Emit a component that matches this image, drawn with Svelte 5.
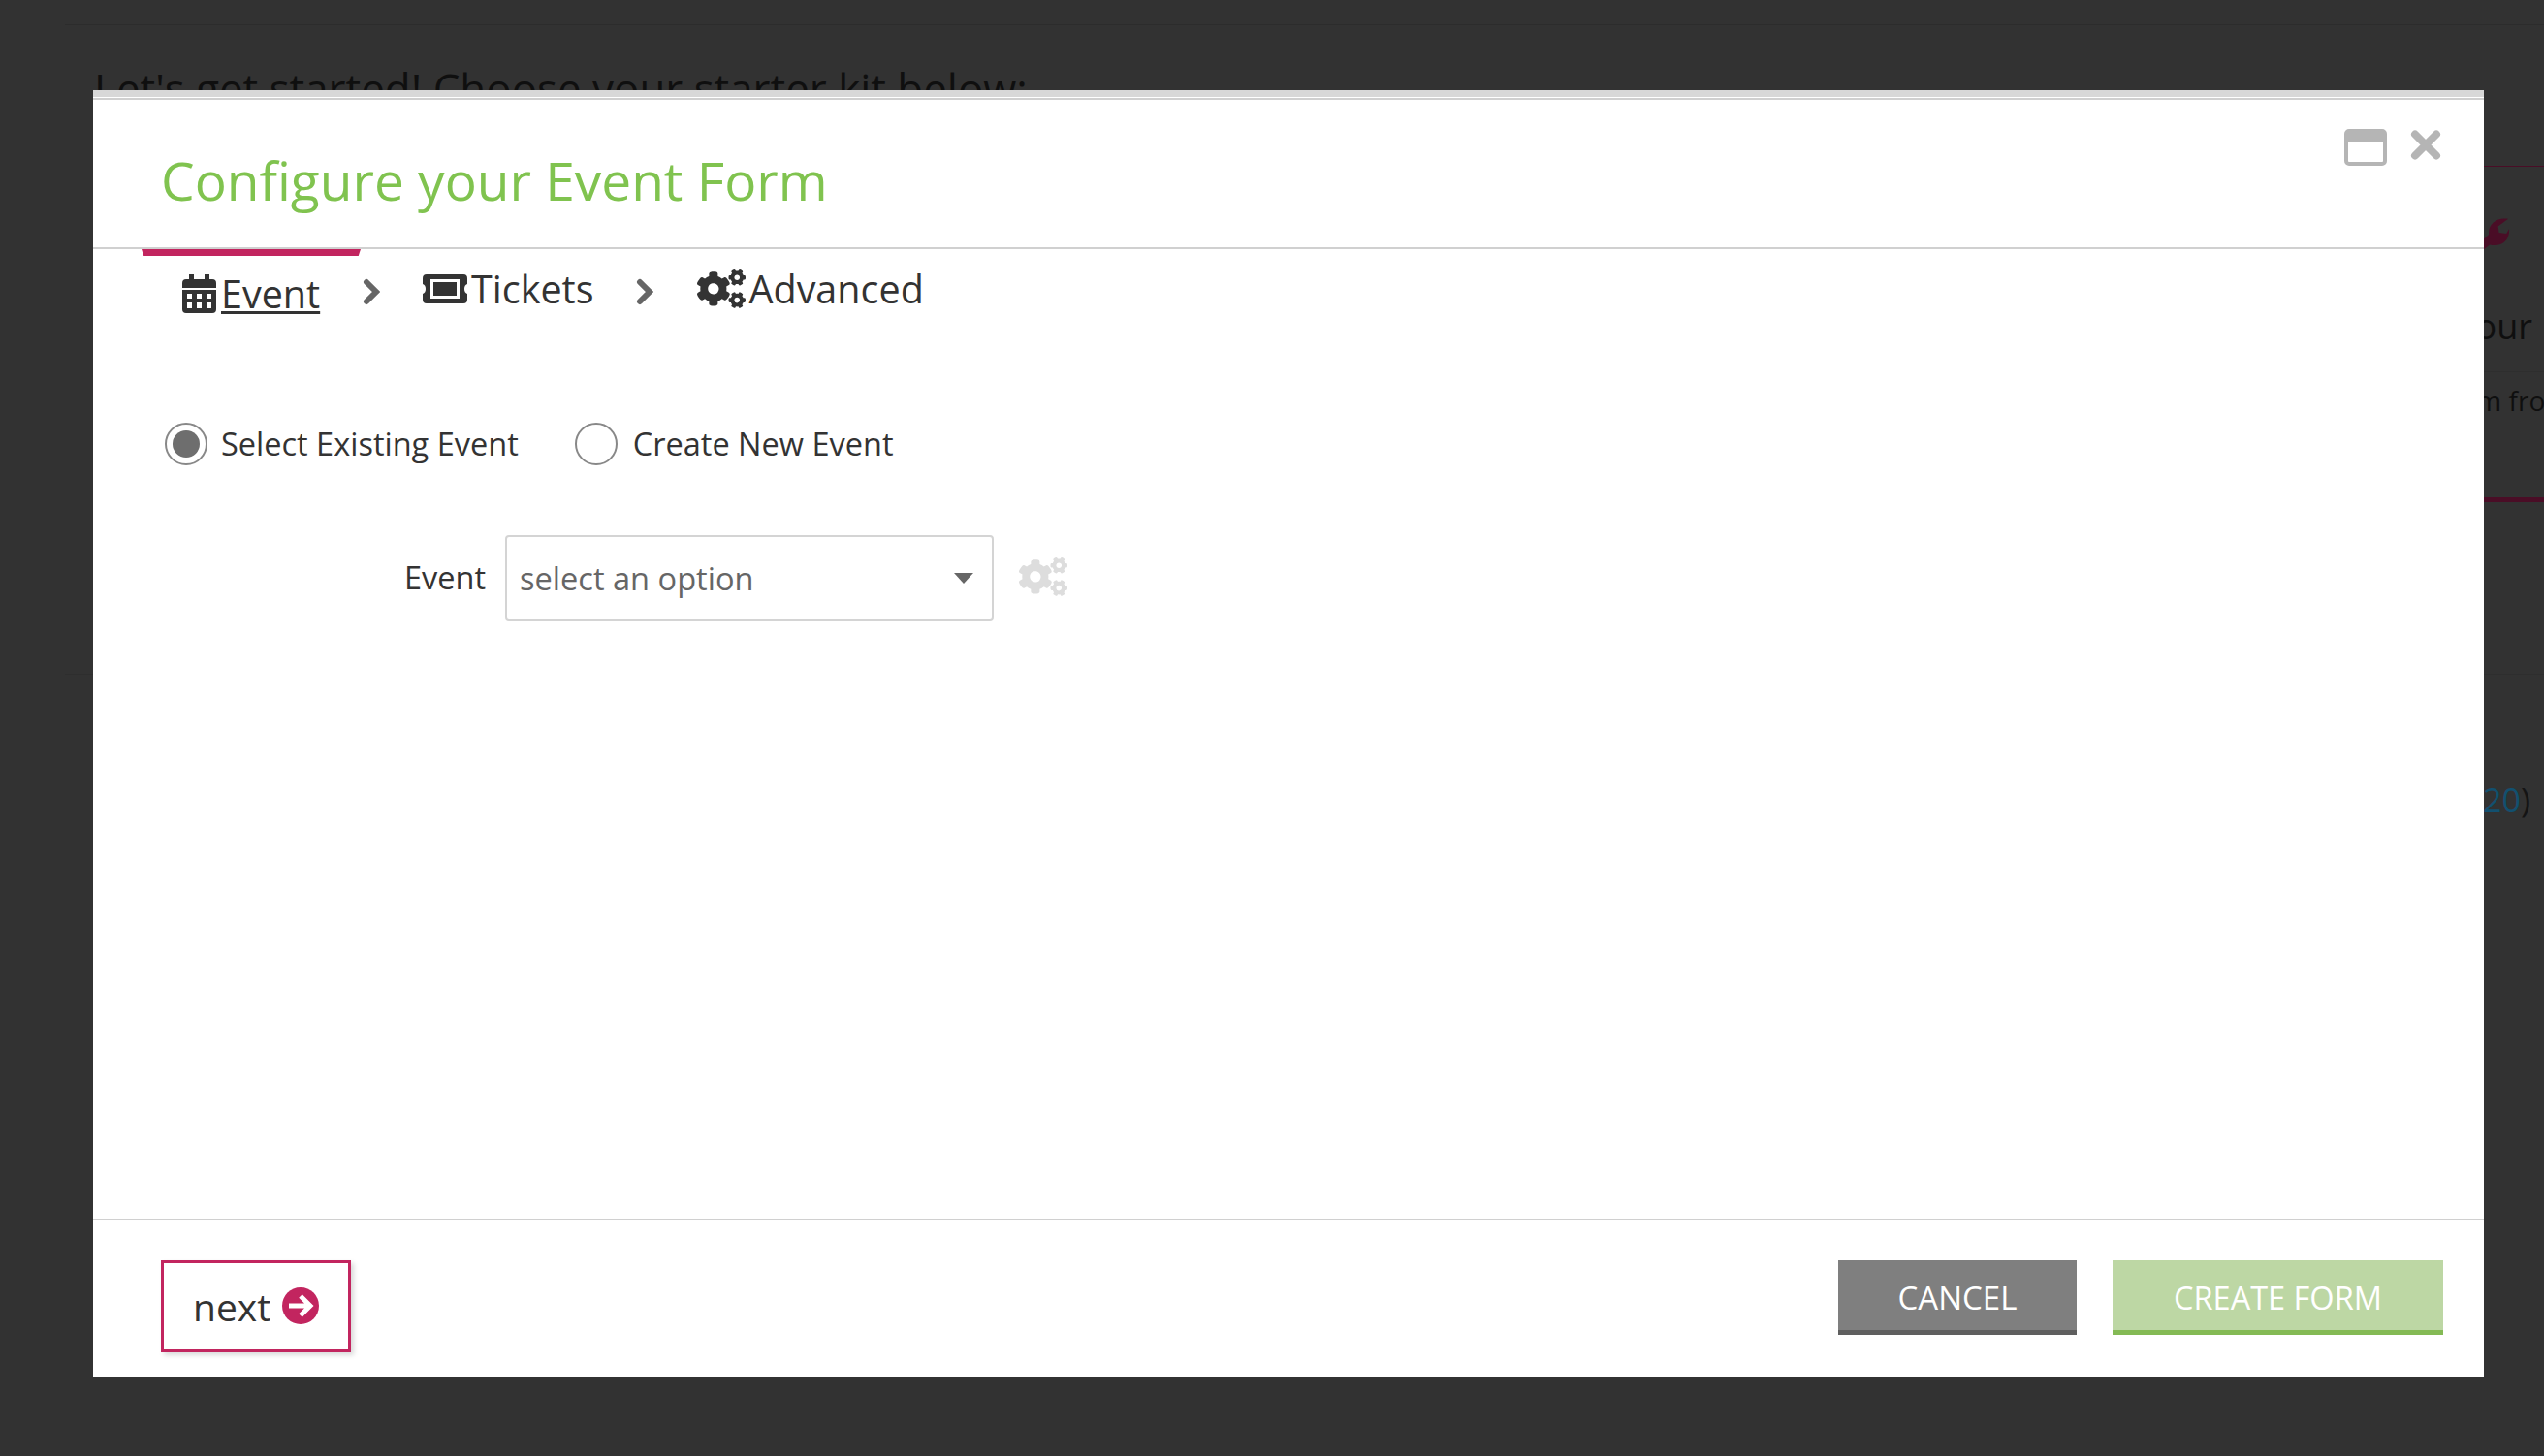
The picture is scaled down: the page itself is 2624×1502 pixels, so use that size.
<script lang="ts">
  let mode = $state('existing');
  const cogs = "M512.1 191l-8.2 14.3c-3 5.3-9.4 7.5-15.1 5.4-11.8-4.4-22.6-10.7-32.1-18.6-4.6-3.8-5.8-10.5-2.8-15.7l8.2-14.3c-6.9-8-12.3-17.3-15.9-27.4h-16.5c-6 0-11.2-4.3-12.2-10.3-2-12-2.1-24.6 0-37.1 1-6 6.2-10.4 12.2-10.4h16.5c3.6-10.1 9-19.4 15.9-27.4l-8.2-14.3c-3-5.2-1.9-11.9 2.8-15.7 9.5-7.9 20.4-14.2 32.1-18.6 5.7-2.1 12.1.1 15.1 5.4l8.2 14.3c10.5-1.9 21.2-1.9 31.7 0L552 6.3c3-5.3 9.4-7.5 15.1-5.4 11.8 4.4 22.6 10.7 32.1 18.6 4.6 3.8 5.8 10.5 2.8 15.7l-8.2 14.3c6.9 8 12.3 17.3 15.9 27.4h16.5c6 0 11.2 4.3 12.2 10.3 2 12 2.1 24.6 0 37.1-1 6-6.2 10.4-12.2 10.4h-16.5c-3.6 10.1-9 19.4-15.9 27.4l8.2 14.3c3 5.2 1.9 11.9-2.8 15.7-9.5 7.9-20.4 14.2-32.1 18.6-5.7 2.1-12.1-.1-15.1-5.4l-8.2-14.3c-10.4 1.9-21.2 1.9-31.7 0zm-10.5-58.8c38.5 29.6 82.4-14.3 52.8-52.8-38.5-29.7-82.4 14.3-52.8 52.8zM386.3 286.1l33.7 16.8c10.1 5.8 14.5 18.1 10.5 29.1-8.9 24.2-26.4 46.4-42.6 65.8-7.4 8.9-20.2 11.1-30.3 5.3l-29.1-16.8c-16 13.7-34.6 24.6-54.9 31.7v33.6c0 11.6-8.3 21.6-19.7 23.6-24.6 4.2-50.4 4.4-75.9 0-11.5-2-20-11.9-20-23.6V418c-20.3-7.2-38.9-18-54.9-31.7L74 403c-10 5.8-22.9 3.6-30.3-5.3-16.2-19.4-33.3-41.6-42.2-65.7-4-10.9.4-23.2 10.5-29.1l33.3-16.8c-3.9-20.9-3.9-42.4 0-63.4L12 205.8c-10.1-5.8-14.6-18.1-10.5-29 8.9-24.2 26-46.4 42.2-65.8 7.4-8.9 20.2-11.1 30.3-5.3l29.1 16.8c16-13.7 34.6-24.6 54.9-31.7V57.1c0-11.5 8.2-21.5 19.6-23.5 24.6-4.2 50.5-4.4 76-.1 11.5 2 20 11.9 20 23.6v33.6c20.3 7.2 38.9 18 54.9 31.7l29.1-16.8c10-5.8 22.9-3.6 30.3 5.3 16.2 19.4 33.2 41.6 42.1 65.8 4 10.9.1 23.2-10 29.1l-33.7 16.8c3.9 21 3.9 42.5 0 63.5zm-117.6 21.1c59.2-77-28.7-164.9-105.7-105.7-59.2 77 28.7 164.9 105.7 105.7zm243.4 182.7l-8.2 14.3c-3 5.3-9.4 7.5-15.1 5.4-11.8-4.4-22.6-10.7-32.1-18.6-4.6-3.8-5.8-10.5-2.8-15.7l8.2-14.3c-6.9-8-12.3-17.3-15.9-27.4h-16.5c-6 0-11.2-4.3-12.2-10.3-2-12-2.1-24.6 0-37.1 1-6 6.2-10.4 12.2-10.4h16.5c3.6-10.1 9-19.4 15.9-27.4l-8.2-14.3c-3-5.2-1.9-11.9 2.8-15.7 9.5-7.9 20.4-14.2 32.1-18.6 5.7-2.1 12.1.1 15.1 5.4l8.2 14.3c10.5-1.9 21.2-1.9 31.7 0l8.2-14.3c3-5.3 9.4-7.5 15.1-5.4 11.8 4.4 22.6 10.7 32.1 18.6 4.6 3.8 5.8 10.5 2.8 15.7l-8.2 14.3c6.9 8 12.3 17.3 15.9 27.4h16.5c6 0 11.2 4.3 12.2 10.3 2 12 2.1 24.6 0 37.1-1 6-6.2 10.4-12.2 10.4h-16.5c-3.6 10.1-9 19.4-15.9 27.4l8.2 14.3c3 5.2 1.9 11.9-2.8 15.7-9.5 7.9-20.4 14.2-32.1 18.6-5.7 2.1-12.1-.1-15.1-5.4l-8.2-14.3c-10.4 1.9-21.2 1.9-31.7 0zM501.6 431c38.5 29.6 82.4-14.3 52.8-52.8-38.5-29.6-82.4 14.3-52.8 52.8z";
</script>

{#snippet chevron()}
  <svg class="chevron" viewBox="0 0 18 28"><path d="M4 4l10 10L4 24" fill="none" stroke="#666" stroke-width="6" stroke-linecap="round" stroke-linejoin="miter"/></svg>
{/snippet}

<div class="page">
  <div class="rule-top"></div>
  <p class="lead">Let's get started! Choose your starter kit below:</p>
  <div class="kit">
    <svg class="wrench" viewBox="0 0 40 40"><path d="M0 36L18 20C17 9 26 1 39 3L28 11l1 7 8 1 3-5c1 13-9 20-21 17L8 40z" fill="#4a0d26"/></svg>
    <div class="kit-title">Configure your</div>
    <div class="kit-text">Build a form from scratch</div>
  </div>
  <div class="rule-mid"></div>
  <div class="date">(20<span class="year">20</span><span class="paren">)</span></div>

  <div class="modal">
    <div class="band"></div>
    <header>
      <h1>Configure your Event Form</h1>
      <div class="window-tools">
        <svg class="maximize" viewBox="0 0 44 38"><rect x="2" y="2" width="40" height="34" rx="3" fill="#fff" stroke="#b5b5b5" stroke-width="4"/><rect x="2" y="2" width="40" height="12" fill="#b5b5b5"/></svg>
        <svg class="close" viewBox="0 0 32 32"><path d="M5 5l22 22M27 5L5 27" stroke="#b5b5b5" stroke-width="8" stroke-linecap="round"/></svg>
      </div>
    </header>

    <nav>
      <div class="tab active">
        <svg class="cal" viewBox="0 0 35 40"><path fill-rule="evenodd" fill="#333" d="M7 0h5v5h11V0h5v5h3q4 0 4 4v5H0V9q0-4 4-4h3zM0 16h35v20q0 4-4 4H4q-4 0-4-4zM5 20v5h5v-5zm10 0v5h5v-5zm10 0v5h5v-5zM5 29v6h5v-6zm10 0v6h5v-6zm10 0v6h5v-6z"/></svg>
        <span class="label">Event</span>
      </div>
      {@render chevron()}
      <div class="tab">
        <svg class="ticket" viewBox="0 0 46 30"><path fill-rule="evenodd" fill="#333" d="M4 0h38q4 0 4 4v6q-3 1-3 5t3 5v6q0 4-4 4H4q-4 0-4-4v-6q3-1 3-5T0 10V4q0-4 4-4zm4 5v20h30V5z"/><rect x="11" y="8" width="24" height="14" fill="#333"/></svg>
        <span class="label">Tickets</span>
      </div>
      <div class="tickets-gap"></div>
      {@render chevron()}
      <div class="tab">
        <svg class="cogs" viewBox="0 0 640 512"><path fill="#333" d={cogs}/></svg>
        <span class="label">Advanced</span>
      </div>
    </nav>

    <section class="body">
      <div class="radios">
        <label class="radio">
          <input type="radio" name="mode" value="existing" bind:group={mode} />
          <span class="dot" class:on={mode === 'existing'}></span>
          Select Existing Event
        </label>
        <label class="radio">
          <input type="radio" name="mode" value="new" bind:group={mode} />
          <span class="dot" class:on={mode === 'new'}></span>
          Create New Event
        </label>
      </div>
      <div class="field">
        <span class="field-label">Event</span>
        <div class="select">
          <span>select an option</span>
          <i class="caret"></i>
        </div>
        <svg class="cogs-light" viewBox="0 0 640 512"><path fill="#ddd" d={cogs}/></svg>
      </div>
    </section>

    <footer>
      <button class="next">
        next
        <svg viewBox="0 0 38 38"><circle cx="19" cy="19" r="19" fill="#c2255f"/><path d="M7 19h21M19 9l10 10-10 10" fill="none" stroke="#fff" stroke-width="5"/></svg>
      </button>
      <div class="actions">
        <button class="btn cancel">CANCEL</button>
        <button class="btn create">CREATE FORM</button>
      </div>
    </footer>
  </div>
</div>

<style>
  :global(body) {
    margin: 0;
    background: #323232;
    font-family: "Open Sans", "Noto Sans", sans-serif;
  }
  .page {
    position: relative;
    width: 2624px;
    height: 1502px;
    overflow: hidden;
    background: #323232;
    color: #0f0f0f;
  }
  .rule-top {
    position: absolute;
    left: 67px;
    right: 0;
    top: 25px;
    height: 1px;
    background: #2c2c2c;
  }
  .lead {
    position: absolute;
    left: 97px;
    top: 62px;
    margin: 0;
    font-size: 43.9px;
    line-height: 58px;
    white-space: nowrap;
  }
  .kit {
    position: absolute;
    left: 2480px;
    top: 171px;
    width: 300px;
    height: 347px;
    box-sizing: border-box;
    border-top: 1px solid #4a0d26;
    border-bottom: 5px solid #4a0d26;
    white-space: nowrap;
  }
  .wrench {
    position: absolute;
    left: 67px;
    top: 51px;
    width: 44px;
    height: 38px;
  }
  .kit-title {
    position: absolute;
    right: 168px;
    top: 140px;
    font-size: 36px;
    line-height: 50px;
  }
  .kit-text {
    position: absolute;
    left: -60px;
    top: 211px;
    padding-top: 10px;
    font-size: 28px;
    line-height: 38px;
    border-top: 1px solid #2e2e2e;
  }
  .rule-mid {
    position: absolute;
    left: 67px;
    right: 0;
    top: 695px;
    height: 1px;
    background: #2e2e2e;
  }
  .date {
    position: absolute;
    right: 14px;
    top: 802px;
    font-size: 34px;
    line-height: 46px;
    white-space: nowrap;
  }
  .year { color: #12506f; }
  .paren { color: #141414; }
  .modal {
    position: absolute;
    left: 96px;
    top: 93px;
    width: 2466px;
    height: 1327px;
    display: flex;
    flex-direction: column;
    background: #fff;
    color: #333;
  }
  .band {
    flex: none;
    box-sizing: border-box;
    height: 10px;
    background: linear-gradient(#d8d8d8 7px, #fff 7px);
    border-bottom: 2px solid #d0d0d0;
  }
  header {
    position: relative;
    flex: none;
    height: 154px;
    box-sizing: border-box;
    padding: 47px 0 0 70px;
    border-bottom: 2px solid #d0d0d0;
  }
  h1 {
    margin: 0;
    font-size: 55px;
    line-height: 72px;
    font-weight: 400;
    color: #80c34f;
  }
  .window-tools {
    position: absolute;
    top: 30px;
    right: 44px;
    display: flex;
    gap: 24px;
    align-items: flex-start;
  }
  .maximize { width: 44px; height: 38px; }
  .close { width: 32px; height: 33px; }
  nav {
    flex: none;
    display: flex;
    align-items: flex-start;
    padding-left: 50px;
  }
  .tab {
    display: flex;
    align-items: flex-start;
    gap: 4px;
    margin-top: 21px;
    font-size: 39.5px;
    line-height: 40px;
  }
  .tab svg { flex: none; margin-top: 5px; }
  .tab.active {
    box-sizing: border-box;
    width: 226px;
    margin-top: 0;
    padding: 26px 0 0 42px;
    gap: 5px;
    position: relative;
  }
  .tab.active::before {
    content: "";
    position: absolute;
    left: 0;
    right: 0;
    top: 0;
    height: 7px;
    background: #c2255f;
    clip-path: polygon(0 0, 100% 0, 99% 100%, 1% 100%);
  }
  .tab.active svg { margin-top: 0; }
  .tab.active .label { text-decoration: underline; text-decoration-thickness: 3px; text-underline-offset: 3px; }
  .chevron { flex: none; width: 18px; height: 28px; margin: 30px 44px 0 2px; }
  .tickets-gap { flex: none; width: 41px; }
  .cal { width: 35px; height: 40px; }
  .ticket { width: 46px; height: 30px; }
  .cogs { width: 50px; height: 40px; margin-top: 0 !important; margin-left: 1px; }
  .body {
    flex: 1;
    padding: 0 0 0 74px;
  }
  .radios {
    display: flex;
    gap: 58px;
    margin-top: 113px;
  }
  .radio {
    display: flex;
    align-items: center;
    gap: 14px;
    font-size: 32.5px;
    line-height: 44px;
  }
  .radio:last-child { gap: 16px; }
  .radio input { display: none; }
  .dot {
    box-sizing: border-box;
    width: 44px;
    height: 44px;
    border: 2px solid #888;
    border-radius: 50%;
    background: #fff;
    display: grid;
    place-items: center;
  }
  .dot.on::after {
    content: "";
    width: 28px;
    height: 28px;
    border-radius: 50%;
    background: #6e6e6e;
  }
  .field {
    display: flex;
    align-items: center;
    margin-top: 72px;
    margin-left: 247px;
  }
  .field-label { font-size: 32.5px; line-height: 44px; width: 102px; margin-top: -2px; }
  .select {
    box-sizing: border-box;
    width: 504px;
    height: 89px;
    margin-left: 2px;
    padding: 0 19px 0 13px;
    display: flex;
    align-items: center;
    justify-content: space-between;
    border: 2px solid #d4d4d4;
    border-radius: 4px;
    font-size: 32.6px;
    color: #666;
  }
  .caret {
    width: 0;
    height: 0;
    border-left: 10px solid transparent;
    border-right: 10px solid transparent;
    border-top: 11px solid #666;
  }
  .cogs-light { width: 52px; height: 40px; margin-left: 25px; margin-top: -3px; }
  footer {
    flex: none;
    height: 163px;
    box-sizing: border-box;
    padding: 41px 42px 0 70px;
    border-top: 2px solid #d0d0d0;
    display: flex;
    justify-content: space-between;
    align-items: flex-start;
  }
  button { font-family: inherit; cursor: pointer; }
  .next {
    box-sizing: border-box;
    width: 196px;
    height: 95px;
    padding: 0 0 0 30px;
    display: flex;
    align-items: center;
    gap: 12px;
    background: #fff;
    color: #333;
    border: 3px solid #c2255f;
    box-shadow: 3px 3px 5px rgba(0, 0, 0, 0.15);
    font-size: 39px;
  }
  .next svg { width: 38px; height: 38px; margin-top: -2px; }
  .actions { display: flex; gap: 37px; }
  .btn {
    box-sizing: border-box;
    height: 77px;
    padding: 5px 0 0;
    border: 0;
    border-bottom: 5px solid;
    color: #fff;
    font-size: 33px;
  }
  .cancel { width: 246px; background: #7f7f7f; border-color: #5f5f5f; }
  .create { width: 341px; background: #bdd7a4; border-color: #84ba55; font-size: 32.5px; }
</style>
